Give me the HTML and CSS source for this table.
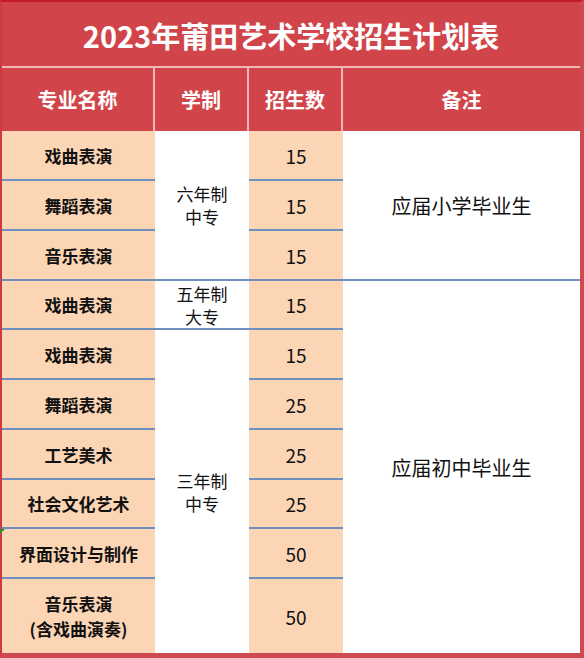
FILE: index.html
```html
<!DOCTYPE html>
<html lang="zh-CN">
<head>
<meta charset="utf-8">
<title>2023年莆田艺术学校招生计划表</title>
<link rel="stylesheet" href="styles.css">
</head>
<body>
<div class="sheet">
  <div class="title">2023年莆田艺术学校招生计划表</div>

  <div class="hd hd1">专业名称</div>
  <div class="hd hd2">学制</div>
  <div class="hd hd3">招生数</div>
  <div class="hd hd4">备注</div>

  <div class="major r1">戏曲表演</div>
  <div class="major r2">舞蹈表演</div>
  <div class="major r3">音乐表演</div>
  <div class="major r4">戏曲表演</div>
  <div class="major r5">戏曲表演</div>
  <div class="major r6">舞蹈表演</div>
  <div class="major r7">工艺美术</div>
  <div class="major r8">社会文化艺术</div>
  <div class="major r9"><span class="flag"></span>界面设计与制作</div>
  <div class="major r10 last two">音乐表演<br>(含戏曲演奏)</div>

  <div class="term g1">六年制<br>中专</div>
  <div class="term g2">五年制<br>大专</div>
  <div class="term g3 last">三年制<br>中专</div>

  <div class="num r1">15</div>
  <div class="num r2">15</div>
  <div class="num r3">15</div>
  <div class="num r4">15</div>
  <div class="num r5">15</div>
  <div class="num r6">25</div>
  <div class="num r7">25</div>
  <div class="num r8">25</div>
  <div class="num r9">50</div>
  <div class="num r10 last">50</div>

  <div class="note n1">应届小学毕业生</div>
  <div class="note n2 last">应届初中毕业生</div>
</div>
</body>
</html>
```

FILE: styles.css
```css
html, body {
  margin: 0;
  padding: 0;
  background: #ffffff;
}

.sheet {
  box-sizing: border-box;
  width: 584px;
  height: 658px;
  border-top: 2px solid #c21c24;
  border-left: 2px solid #d0393f;
  border-right: 4px solid #cd4b50;
  border-bottom: 5px solid #cd4b50;
  display: grid;
  grid-template-columns: 153px 94px 94px 1fr;
  grid-template-rows: 66px 63px 50px 50px 50px 49px 50px 50px 50px 49px 50px 74px;
  font-family: "Noto Sans CJK SC", "Noto Sans", sans-serif;
  color: #111111;
}

.sheet > div {
  box-sizing: border-box;
  display: flex;
  align-items: center;
  justify-content: center;
  text-align: center;
}

.title {
  grid-column: 1 / 5;
  grid-row: 1;
  background: #d1454a;
  color: #ffffff;
  font-size: 29px;
  font-weight: 700;
  border-bottom: 2px solid #f0b5b5;
  padding-top: 2px;
}

.hd {
  grid-row: 2;
  background: #d1454a;
  color: #ffffff;
  font-size: 20px;
  font-weight: 700;
  border-right: 2px solid #f0b5b5;
}
.hd1 { grid-column: 1; }
.hd2 { grid-column: 2; }
.hd3 { grid-column: 3; }
.hd4 { grid-column: 4; border-right: none; }

.major {
  grid-column: 1;
  background: #fcd5b4;
  font-size: 17px;
  font-weight: 700;
  border-bottom: 2px solid #6f8fbe;
  position: relative;
}
.major.two { line-height: 25px; }

.num {
  grid-column: 3;
  background: #fcd5b4;
  font-size: 19px;
  border-bottom: 2px solid #6f8fbe;
}

.r1 { grid-row: 3; }
.r2 { grid-row: 4; }
.r3 { grid-row: 5; }
.r4 { grid-row: 6; }
.r5 { grid-row: 7; }
.r6 { grid-row: 8; }
.r7 { grid-row: 9; }
.r8 { grid-row: 10; }
.r9 { grid-row: 11; }
.r10 { grid-row: 12; }

.term {
  grid-column: 2;
  background: #ffffff;
  font-size: 17px;
  line-height: 23px;
  border-bottom: 2px solid #6f8fbe;
}
.g1 { grid-row: 3 / 6; }
.g2 { grid-row: 6; }
.g3 { grid-row: 7 / 13; }

.note {
  grid-column: 4;
  background: #ffffff;
  font-size: 20px;
  border-bottom: 2px solid #6f8fbe;
}
.n1 { grid-row: 3 / 6; }
.n2 { grid-row: 6 / 13; }

.sheet > .last { border-bottom: none; }

.flag {
  position: absolute;
  left: -2px;
  top: 0;
  width: 0;
  height: 0;
  border-left: 5px solid #2e8b2e;
  border-bottom: 5px solid transparent;
}
```
